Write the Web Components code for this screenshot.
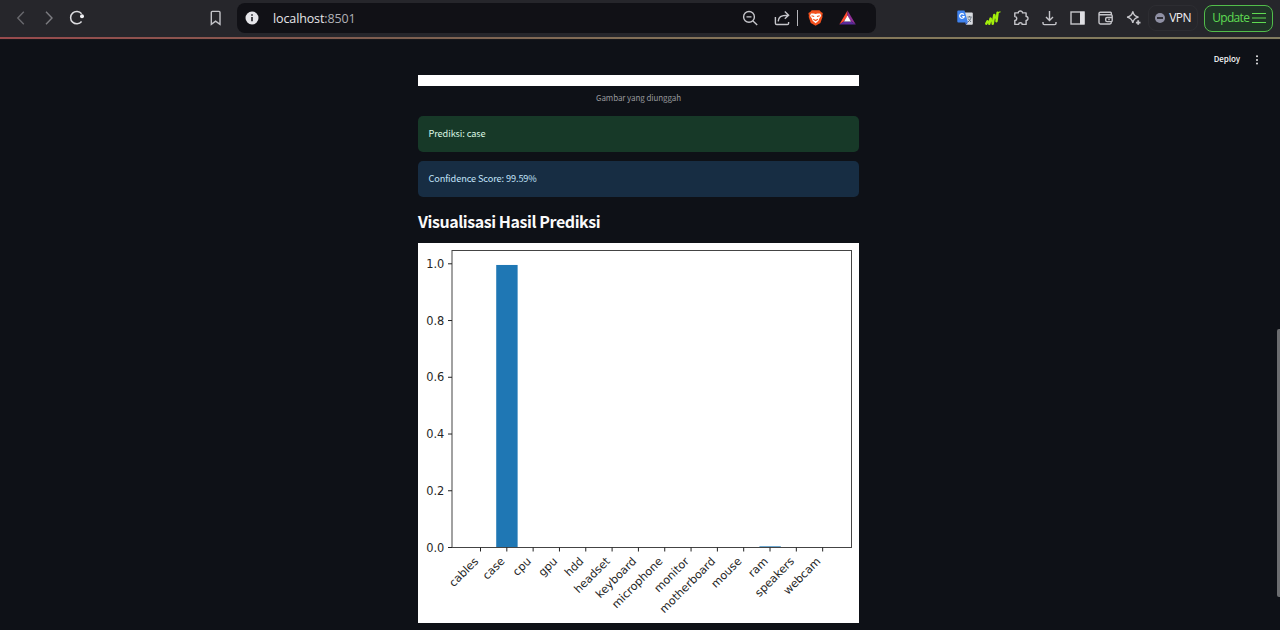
<!DOCTYPE html>
<html lang="id">
<head>
<meta charset="utf-8">
<title>localhost:8501</title>
<style>
html,body{margin:0;height:100%;overflow:hidden;background:#0e1117}
body{font-family:"Noto Sans CJK SC","Noto Sans",sans-serif;color:#fafafa}
</style>
</head>
<body>
<browser-window>
  <browser-toolbar slot="toolbar" url="localhost" port=":8501"></browser-toolbar>
  <app-header slot="page">Deploy</app-header>
  <app-main slot="page">
    <uploaded-image>Gambar yang diunggah</uploaded-image>
    <alert-box kind="success" style="--track:-0.09px">Prediksi: case</alert-box>
    <alert-box kind="info" style="--track:-0.1px">Confidence Score: 99.59%</alert-box>
    <section-title>Visualisasi Hasil Prediksi</section-title>
    <bar-chart></bar-chart>
  </app-main>
  <scroll-thumb slot="overlay"></scroll-thumb>
</browser-window>

<script>
function define(name, html, setup) {
  const t = document.createElement('template');
  t.innerHTML = html;
  customElements.define(name, class extends HTMLElement {
    constructor() {
      super();
      this.attachShadow({mode: 'open'}).appendChild(t.content.cloneNode(true));
    }
    connectedCallback() { if (setup) setup(this, this.shadowRoot); }
  });
}

define('browser-window', `
<style>
:host{display:flex;flex-direction:column;width:1280px;height:630px;overflow:hidden;position:relative;background:#0e1117}
.page{flex:1;display:flex;flex-direction:column;min-height:0;overflow:hidden}
</style>
<slot name="toolbar"></slot><div class="page"><slot name="page"></slot></div><slot name="overlay"></slot>`);

const ICONS = {
  back: '<path d="M12.800 3.800 6.800 10l6 6.200" stroke="#68686d"/>',
  forward: '<path d="M7 3.800l6 6.200-6 6.200" stroke="#7c7c81"/>',
  reload: '<path d="M14.600 13.600A6.200 6.200 0 1 1 14.600 5.700" stroke="#dcdce0" stroke-width="1.500"/><circle cx="15" cy="8.300" r="2" fill="#f2f2f5" stroke="none"/>',
  bookmark: '<path d="M6.300 4.400q0-1 1-1h6.700q1 0 1 1v12l-4.400-3.200-4.300 3.200z" stroke="#c3c3c8"/>',
  info: '<circle cx="10" cy="10" r="6.500" fill="#e6e6ea" stroke="none"/><path d="M10 9v4.300M10 6.300v1.500" stroke="#111116" stroke-width="1.500"/>',
  zoomout: '<circle cx="9" cy="8.900" r="5.400"/><path d="M13 13l4.200 3.900M6.500 8.900h5"/>',
  share: '<path d="M3.400 9v6.200q0 1.300 1.300 1.300h10.600q1.300 0 1.300-1.300V14"/><path d="M6.200 13.400c.3-4.400 2.600-6.200 9.800-6.200M12.800 3.600l3.800 3.600-3.800 3.600"/>',
  brave: '<path d="M5.700 2.200h7.800l1.500 1.900 1.800.8-.5 2.800.2 1.200-2.100 6L9.600 17.800l-4.800-2.900L2.700 8.900l.2-1.200-.5-2.800 1.800-.8z" fill="#f3501d" stroke="none"/><path d="M5 5.600l2.800-.2 1.800.6 1.800-.6 2.800.2 1 2.200-2 3-.7 2-2.900 2.400-2.900-2.400-.7-2-2-3z" fill="#fff" stroke="none"/><path d="M5.500 7.700l2.700.9M13.700 7.700l-2.700.9M7.300 11.300l2.300 1.300 2.300-1.300" stroke="#f3501d" stroke-width="1.100"/>',
  bat: '<path d="M9.500 2.400V8L5.800 13.500 1.300 16.600z" fill="#ff4b2e" stroke="none"/><path d="M9.500 2.400l8.300 14.200-4.600-3.100L9.500 8z" fill="#8f2f96" stroke="none"/><path d="M1.300 16.600l4.500-3.100h7.400l4.600 3.100z" fill="#5b2a9c" stroke="none"/><path d="M9.500 7.600l3.500 6H6z" fill="#fff" stroke="none"/>',
  translate: '<path d="M8.500 4.500h8.400q.9 0 .9.900v10.400q0 .9-.9.900H11z" fill="#d9dbe0" stroke="none"/><path d="M3.300 2.400h6.200l3.500 12H3.300q-1 0-1-1v-10q0-1 1-1z" fill="#3f82ee" stroke="none"/><path d="M8.800 6.600A2.300 2.300 0 1 0 9.200 8.500H7.200" stroke="#fff" stroke-width="1.200"/><path d="M12.400 9h4.300M14.500 8v1M16 9.300c-.3 2-1.500 3.600-3 4.600M13 10.500l3 3.500" stroke="#66727f" stroke-width="1"/><path d="M11 16.700l2-2.300H10z" fill="#2457c5" stroke="none"/>',
  chart: '<path d="M3.300 15.600l1.200-2.200M6.300 15.700l1.300-5.100M9.700 15.700l1.600-8.700M13.500 13.200l1.100-8.500" stroke="#a3ef0b" stroke-width="2.500" stroke-linecap="round"/><path d="M8 10.500l1 4M11.800 7l1.200 4M14.500 4.800l3-1" stroke="#a3ef0b" stroke-width="1.100"/>',
  puzzle: '<path d="M3.800 4.900h3.500C7 2.500 11.600 2.300 11.500 4.900h3.600v3.600c2.500-.3 2.500 4 0 3.900v4h-4c.1-2.300-3.400-2.300-3.500 0H3.800v-4c2.600-.1 2.600-3.700 0-3.900z" stroke-linejoin="round"/>',
  download: '<path d="M9.500 3v9.300M6 9l3.500 3.500L13 9M3 14v1.300q0 1.300 1.300 1.300h10.400q1.300 0 1.300-1.300V14"/>',
  sidebar: '<rect x="3" y="4" width="13" height="12"/><path d="M12 3.700h4.500v12.600H12z" fill="#dedee3" stroke="none"/>',
  wallet: '<path d="M15.300 6.800V5q0-.8-.8-.8H4.400q-1.400 0-1.400 1.400v9q0 1.400 1.400 1.400h9.500q1.400 0 1.400-1.400v-1M3.300 6.800H15q1.200 0 1.200 1.200v4.400q0 1.200-1.200 1.200h-4q-1.300 0-1.300-1.300v-1.500q0-1.300 1.300-1.300h5.200M12.300 11.500h1.400"/>',
  sparkle: '<path d="M8.800 3.300q.8 4.700 5.700 5.800-4.900 1.100-5.700 5.800-.8-4.700-5.700-5.800 4.900-1.100 5.700-5.800z"/><path d="M14.200 12.300v4.500M11.900 14.600h4.600" stroke-width="1.800"/>'
};
define('tool-icon', `
<style>:host{display:block;width:20px;height:20px;flex:none}svg{display:block;fill:none;stroke:#c6c6cb;stroke-width:1.4}</style>
<svg width="20" height="20" viewBox="0 0 20 20"></svg>`,
(el, root) => { root.querySelector('svg').innerHTML = ICONS[el.getAttribute('name')]; });

define('browser-toolbar', `
<style>
:host{display:flex;flex:none;height:40px;box-sizing:border-box;align-items:flex-start;background:#26262b;position:relative;
  font-family:"Open Sans","Noto Sans",sans-serif}
:host::after{content:"";position:absolute;left:0;right:0;bottom:0;height:3px;
  background:linear-gradient(#15161a,#15161a) 0 2px/100% 1px no-repeat,linear-gradient(90deg,#984a4d,#7d5f50 400px,#837058 640px,#85785a 850px,#827d60)}
.row{display:flex;align-items:center;height:36px}
.nav{gap:8px;padding-left:11px;width:194px;box-sizing:border-box}
.address{margin:3px 0 0 10px;width:639px;height:30px;box-sizing:border-box;background:#111116;border-radius:8px;display:flex;align-items:center;padding:0 18px 0 5px}
.url{font-size:12.500px;line-height:20px;padding-top:1px;margin-left:11px;color:#e6e6e9;letter-spacing:-.12px;flex:1}
.url i{font-style:normal;color:#b0b0b5}
.acts{display:flex;align-items:center}
.line{width:1px;height:16px;background:#b5b5ba;margin:0 8px 0 5px}
.ext{margin-left:79px;gap:8.200px}
.vpn{display:flex;align-items:center;justify-content:center;gap:4px;width:50px;height:26px;box-sizing:border-box;border:1px solid #2d2d32;border-radius:8px;margin-left:4px;font-size:12px;color:#f0f0f3;letter-spacing:-.5px}
.vpn span,.update span{margin-top:-1px}
.dot{width:10px;height:10px;border-radius:5px;background:#8f90a4;display:flex;align-items:center;justify-content:center}
.dot b{width:6px;height:2px;background:#303038}
.update{display:flex;align-items:center;justify-content:space-between;width:69px;height:27px;box-sizing:border-box;border:1px solid #52bd4b;border-radius:8px;background:#203527;margin-left:6px;padding:0 6px 0 7px;font-size:12px;color:#5fdb52;letter-spacing:-.65px}
.update svg{display:block}
</style>
<div class="row nav"><tool-icon name="back"></tool-icon><tool-icon name="forward"></tool-icon><tool-icon name="reload"></tool-icon></div>
<div class="row" style="padding-left:11px;width:22px"><tool-icon name="bookmark"></tool-icon></div>
<div class="address">
  <tool-icon name="info"></tool-icon><div class="url"><span></span><i></i></div>
  <div class="acts"><tool-icon name="zoomout"></tool-icon><tool-icon name="share" style="margin-left:12px"></tool-icon><div class="line"></div><tool-icon name="brave"></tool-icon><tool-icon name="bat" style="margin-left:12px"></tool-icon></div>
</div>
<div class="row ext"><tool-icon name="translate"></tool-icon><tool-icon name="chart"></tool-icon><tool-icon name="puzzle"></tool-icon><tool-icon name="download"></tool-icon><tool-icon name="sidebar"></tool-icon><tool-icon name="wallet"></tool-icon><tool-icon name="sparkle"></tool-icon></div>
<div class="row"><div class="vpn"><div class="dot"><b></b></div><span>VPN</span></div><div class="update"><span>Update</span><svg width="14" height="12" viewBox="0 0 14 12"><path d="M0 1.500h14M0 6h14M0 10.500h14" stroke="#5fdb52" stroke-width="1.100"/></svg></div></div>`,
(el, root) => {
  root.querySelector('.url span').textContent = el.getAttribute('url');
  root.querySelector('.url i').textContent = el.getAttribute('port');
});

define('app-header', `
<style>
:host{display:flex;flex:none;height:35px;box-sizing:border-box;padding:0 20px 0 0;align-items:center;justify-content:flex-end;gap:14px;font-size:8px;font-weight:500;line-height:12px;color:#fafafa}
.label{padding-top:2px;letter-spacing:-.1px}
svg{display:block;margin-top:4px}
</style>
<span class="label"><slot></slot></span>
<svg width="6" height="10" viewBox="0 0 6 10" fill="#e6e6e8"><circle cx="3" cy="1.300" r="1"/><circle cx="3" cy="4.900" r="1"/><circle cx="3" cy="8.500" r="1"/></svg>`);

define('app-main', `
<style>:host{display:flex;flex-direction:column;width:441px;margin-left:418px}</style><slot></slot>`);

define('uploaded-image', `
<style>
:host{display:flex;flex-direction:column;height:41px}
.img{height:11px;background:#fff}
.cap{text-align:center;font-size:8px;line-height:12px;padding-top:6px;color:#96989c;letter-spacing:-.07px}
</style><div class="img"></div><div class="cap"><slot></slot></div>`);

define('alert-box', `
<style>
:host{display:flex;align-items:center;height:36px;box-sizing:border-box;margin-bottom:9px;padding:0 10px 3px 10.500px;border-radius:5px;font-size:9.200px;line-height:14px;letter-spacing:var(--track,0)}
:host([kind=success]){background:#173928;color:#dcf8e5}
:host([kind=info]){background:#172d43;color:#c2e4fa}
</style><slot></slot>`);

define('section-title', `
<style>
:host{display:block;height:37px;line-height:31px;font-size:16px;font-weight:700;letter-spacing:-.43px;color:#fafafa;white-space:nowrap}
</style><slot></slot>`);

define('bar-chart', `
<style>:host{display:block;height:380px}svg{display:block;background:#fff}
text{font-family:"DejaVu Sans",sans-serif;font-size:11.400px;fill:#262626}</style>
<svg width="441" height="379.500" viewBox="418 243 441 379.500"></svg>`,
(el, root) => {
  const labels = ['cables','case','cpu','gpu','hdd','headset','keyboard','microphone','monitor','motherboard','mouse','ram','speakers','webcam'];
  const values = [0,.9959,0,0,0,0,0,0,0,0,0,.004,0,0];
  const y0 = 547.5, unit = 283.7, x0 = 480.5, step = 26.32;
  let s = '';
  values.forEach((v, i) => {
    if (v) s += `<rect x="${x0 + i*step - 10.6}" y="${y0 - v*unit}" width="21.400" height="${v*unit}" fill="#1f77b4"/>`;
  });
  s += '<rect x="452" y="250.500" width="399.500" height="297" fill="none" stroke="#444" stroke-width="1"/>';
  for (let k = 0; k <= 5; k++) {
    const y = y0 - unit*k/5;
    s += `<path d="M448 ${y}h4" stroke="#222"/><text x="444.300" y="${y + 4.2}" text-anchor="end">${(k/5).toFixed(1)}</text>`;
  }
  labels.forEach((l, i) => {
    const x = x0 + i*step;
    s += `<path d="M${x} 547.500v4" stroke="#222"/><text style="font-size:11.200px" transform="translate(${x - 1.4} 562) rotate(-45)" text-anchor="end">${l}</text>`;
  });
  root.querySelector('svg').innerHTML = s;
});

define('scroll-thumb', `
<style>:host{display:block;position:absolute;right:0;top:329px;width:3px;height:268px;background:#6b6d70;border-radius:2px 0 0 2px}</style>`);
</script>
</body>
</html>
